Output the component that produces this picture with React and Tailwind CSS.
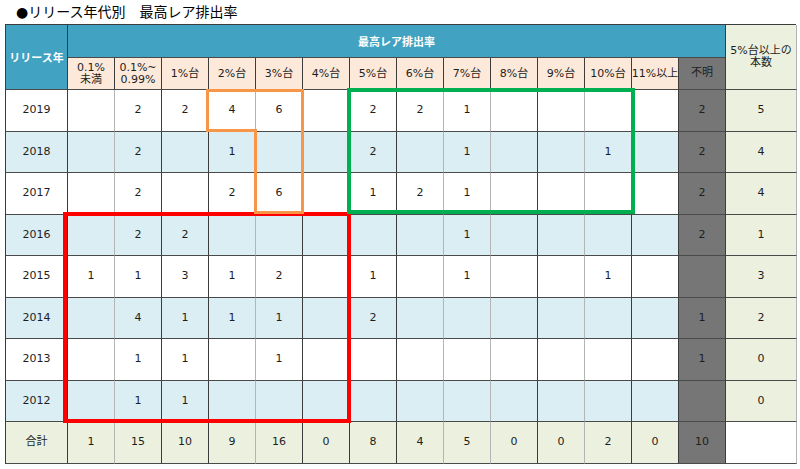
const FONT = { fontFamily: '"DejaVu Sans", "Noto Sans CJK JP", sans-serif' };

const cols = ["0.1%\n未満", "0.1%~\n0.99%", "1%台", "2%台", "3%台", "4%台", "5%台", "6%台", "7%台", "8%台", "9%台", "10%台", "11%以上"];

// right-border darkness for the 13 rate columns
const darkRight = [false, true, true, false, true, true, true, false, false, true, false, true, true];

const rows = [
  { year: "2019", v: ["", "2", "2", "4", "6", "", "2", "2", "1", "", "", "", ""], unk: "2", over: "5" },
  { year: "2018", v: ["", "2", "", "1", "", "", "2", "", "1", "", "", "1", ""], unk: "2", over: "4" },
  { year: "2017", v: ["", "2", "", "2", "6", "", "1", "2", "1", "", "", "", ""], unk: "2", over: "4" },
  { year: "2016", v: ["", "2", "2", "", "", "", "", "", "1", "", "", "", ""], unk: "2", over: "1" },
  { year: "2015", v: ["1", "1", "3", "1", "2", "", "1", "", "1", "", "", "1", ""], unk: "", over: "3" },
  { year: "2014", v: ["", "4", "1", "1", "1", "", "2", "", "", "", "", "", ""], unk: "1", over: "2" },
  { year: "2013", v: ["", "1", "1", "", "1", "", "", "", "", "", "", "", ""], unk: "1", over: "0" },
  { year: "2012", v: ["", "1", "1", "", "", "", "", "", "", "", "", "", ""], unk: "", over: "0" },
];

const totals = ["1", "15", "10", "9", "16", "0", "8", "4", "5", "0", "0", "2", "0"];

function Cell({ children, bg, dark = true, className = "" }) {
  return (
    <div
      className={`flex items-center justify-center border-r border-b border-b-[#4a4a4a] text-[11px] text-[#1e1e1e] ${
        dark ? "border-r-[#3c3c3c]" : "border-r-[#b4b4b4]"
      } ${bg} ${className}`}
    >
      {children}
    </div>
  );
}

export default function App() {
  return (
    <div className="w-[800px] h-[469px] bg-white" style={FONT}>
      <div className="h-6 flex items-center pl-4 text-[14px] text-black">●リリース年代別　最高レア排出率</div>

      <div className="relative ml-[5px] w-[791px]">
        <div className="grid grid-cols-[62px_repeat(14,47px)_71px] grid-rows-[33px_32px_42px_41px_42px_41px_42px_41px_42px_41px_42px] border-l border-t border-[#3c3c3c]">
          <Cell bg="bg-[#42a2c1]" className="row-span-2 pt-1 text-white font-bold">
            リリース年
          </Cell>
          <Cell bg="bg-[#42a2c1]" className="col-span-14 pt-1 text-white font-bold">
            最高レア排出率
          </Cell>
          <Cell bg="bg-[#ebf1de]" className="row-span-2 border-r-[#b4b4b4] leading-[12px] text-center whitespace-pre">
            {"5%台以上の\n本数"}
          </Cell>

          {cols.map((c) => (
            <Cell key={c} bg="bg-[#fde9d9]" className="whitespace-pre text-center leading-[12px]">
              {c}
            </Cell>
          ))}
          <Cell bg="bg-[#767676]">不明</Cell>

          {rows.map((r, ri) => {
            const bg = ri % 2 ? "bg-[#daeef3]" : "bg-white";
            return [
              <Cell key={r.year} bg={bg}>
                {r.year}
              </Cell>,
              ...r.v.map((x, i) => (
                <Cell key={r.year + i} bg={bg} dark={darkRight[i]}>
                  {x}
                </Cell>
              )),
              <Cell key={r.year + "u"} bg="bg-[#767676]">
                {r.unk}
              </Cell>,
              <Cell key={r.year + "o"} bg="bg-[#ebf1de]" className="border-r-[#b4b4b4]">
                {r.over}
              </Cell>,
            ];
          })}

          <Cell bg="bg-[#ebf1de]">合計</Cell>
          {totals.map((x, i) => (
            <Cell key={"t" + i} bg="bg-[#ebf1de]" dark={darkRight[i]}>
              {x}
            </Cell>
          ))}
          <Cell bg="bg-[#767676]">10</Cell>
          <Cell bg="bg-white" className="border-r-[#b4b4b4]" />
        </div>

        <svg className="absolute left-0 top-0 pointer-events-none" width="792" height="440" viewBox="0 0 792 440">
          <rect x="60" y="190" width="284" height="207" fill="none" stroke="#ff0000" strokeWidth="4" />
          <rect x="344" y="66" width="284" height="122" fill="none" stroke="#00b050" strokeWidth="4" />
          <path d="M202.5 66.5 H297.5 V188.5 H250.5 V106.5 H202.5 Z" fill="none" stroke="#f79646" strokeWidth="3" />
        </svg>
      </div>
    </div>
  );
}
